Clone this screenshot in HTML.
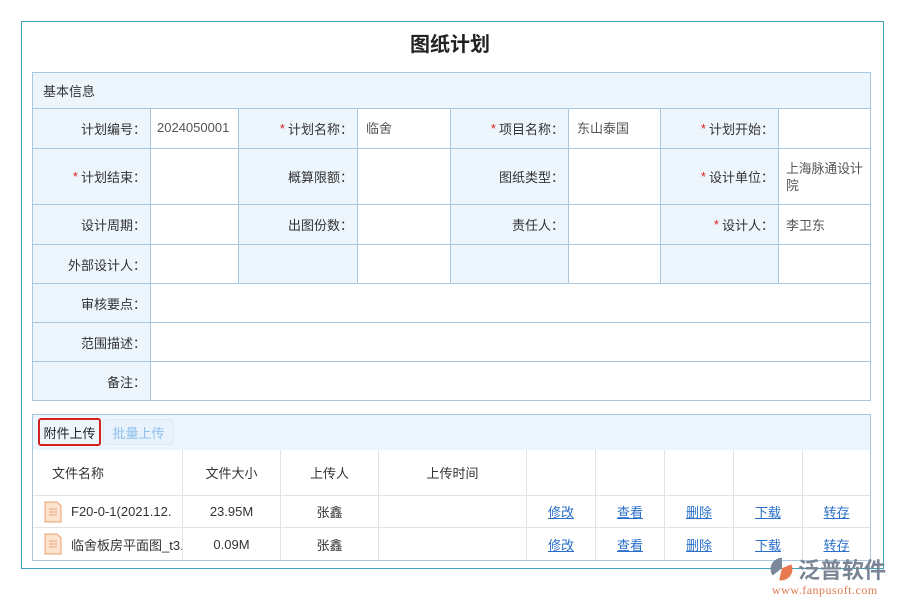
<!DOCTYPE html>
<html><head><meta charset="utf-8"><style>
body{margin:0;width:900px;height:600px;background:#fff;position:relative;overflow:hidden;font-family:"Liberation Sans","Noto Sans CJK SC",sans-serif;font-size:13px;color:#333}
.a{position:absolute;box-sizing:border-box}
.c{position:absolute;box-sizing:border-box;border:1px solid #a9c8e0;display:flex;align-items:center;padding:0 8px;margin:0 -1px -1px 0}
.l{background:#eef6fd;justify-content:flex-end;padding-right:4px}
.v{background:#fff;color:#555}
.s{color:#e02020;margin-right:3px}
.t{position:absolute;box-sizing:border-box;border-right:1px solid #e3e3e3;border-bottom:1px solid #e3e3e3;display:flex;align-items:center;justify-content:center;color:#333}
.k{color:#2a6fc9;text-decoration:underline}
</style></head><body>
<div class="a" style="left:21px;top:21px;width:863px;height:548px;border:1px solid #3fa0b8"></div>
<div class="a" style="left:0;top:28px;width:900px;text-align:center;font-size:20px;font-weight:bold;color:#222">图纸计划</div>
<div class="c" style="left:32px;top:72px;width:839px;height:37px;background:#eef6fd;justify-content:flex-start;padding-left:10px">基本信息</div>

<div class="c l" style="left:32px;top:108px;width:119px;height:41px">计划编号：</div>
<div class="c v" style="left:150px;top:108px;width:89px;height:41px;padding:0 0 2px 6px">2024050001</div>
<div class="c l" style="left:238px;top:108px;width:120px;height:41px"><span class="s">*</span>计划名称：</div>
<div class="c v" style="left:357px;top:108px;width:94px;height:41px;padding-bottom:2px">临舍</div>
<div class="c l" style="left:450px;top:108px;width:119px;height:41px"><span class="s">*</span>项目名称：</div>
<div class="c v" style="left:568px;top:108px;width:93px;height:41px;padding-bottom:2px">东山泰国</div>
<div class="c l" style="left:660px;top:108px;width:119px;height:41px"><span class="s">*</span>计划开始：</div>
<div class="c v" style="left:778px;top:108px;width:93px;height:41px"></div>

<div class="c l" style="left:32px;top:148px;width:119px;height:57px"><span class="s">*</span>计划结束：</div>
<div class="c v" style="left:150px;top:148px;width:89px;height:57px"></div>
<div class="c l" style="left:238px;top:148px;width:120px;height:57px">概算限额：</div>
<div class="c v" style="left:357px;top:148px;width:94px;height:57px"></div>
<div class="c l" style="left:450px;top:148px;width:119px;height:57px">图纸类型：</div>
<div class="c v" style="left:568px;top:148px;width:93px;height:57px"></div>
<div class="c l" style="left:660px;top:148px;width:119px;height:57px"><span class="s">*</span>设计单位：</div>
<div class="c v" style="left:778px;top:148px;width:93px;height:57px;align-items:flex-start;padding:11px 0 0 7px;line-height:17px;font-size:12.8px">上海脉通设计院</div>

<div class="c l" style="left:32px;top:204px;width:119px;height:41px">设计周期：</div>
<div class="c v" style="left:150px;top:204px;width:89px;height:41px"></div>
<div class="c l" style="left:238px;top:204px;width:120px;height:41px">出图份数：</div>
<div class="c v" style="left:357px;top:204px;width:94px;height:41px"></div>
<div class="c l" style="left:450px;top:204px;width:119px;height:41px">责任人：</div>
<div class="c v" style="left:568px;top:204px;width:93px;height:41px"></div>
<div class="c l" style="left:660px;top:204px;width:119px;height:41px"><span class="s">*</span>设计人：</div>
<div class="c v" style="left:778px;top:204px;width:93px;height:41px;padding-left:7px">李卫东</div>

<div class="c l" style="left:32px;top:244px;width:119px;height:40px">外部设计人：</div>
<div class="c v" style="left:150px;top:244px;width:89px;height:40px"></div>
<div class="c l" style="left:238px;top:244px;width:120px;height:40px"></div>
<div class="c v" style="left:357px;top:244px;width:94px;height:40px"></div>
<div class="c l" style="left:450px;top:244px;width:119px;height:40px"></div>
<div class="c v" style="left:568px;top:244px;width:93px;height:40px"></div>
<div class="c l" style="left:660px;top:244px;width:119px;height:40px"></div>
<div class="c v" style="left:778px;top:244px;width:93px;height:40px"></div>

<div class="c l" style="left:32px;top:283px;width:119px;height:40px">审核要点：</div>
<div class="c v" style="left:150px;top:283px;width:721px;height:40px"></div>
<div class="c l" style="left:32px;top:322px;width:119px;height:40px">范围描述：</div>
<div class="c v" style="left:150px;top:322px;width:721px;height:40px"></div>
<div class="c l" style="left:32px;top:361px;width:119px;height:40px">备注：</div>
<div class="c v" style="left:150px;top:361px;width:721px;height:40px"></div>

<div class="a" style="left:32px;top:414px;width:839px;height:147px;border:1px solid #a9c8e0"></div>
<div class="a" style="left:33px;top:415px;width:837px;height:35px;background:#eef6fd"></div>
<div class="a" style="left:38px;top:418px;width:63px;height:28px;border:2px solid #d42020;border-radius:3px;display:flex;align-items:center;justify-content:center;color:#222">附件上传</div>
<div class="a" style="left:103px;top:419px;width:71px;height:26px;border:1px solid #dce9f5;border-radius:4px;background:#e8f2fc;display:flex;align-items:center;justify-content:center;color:#8ec0ec">批量上传</div>

<div class="t" style="left:33px;top:450px;width:150px;height:46px;justify-content:flex-start;padding-left:19px">文件名称</div>
<div class="t" style="left:183px;top:450px;width:98px;height:46px">文件大小</div>
<div class="t" style="left:281px;top:450px;width:98px;height:46px">上传人</div>
<div class="t" style="left:379px;top:450px;width:148px;height:46px">上传时间</div>
<div class="t" style="left:527px;top:450px;width:69px;height:46px"></div>
<div class="t" style="left:596px;top:450px;width:69px;height:46px"></div>
<div class="t" style="left:665px;top:450px;width:69px;height:46px"></div>
<div class="t" style="left:734px;top:450px;width:69px;height:46px"></div>
<div class="t" style="left:803px;top:450px;width:67px;height:46px;border-right:none"></div>

<div class="t" style="left:33px;top:496px;width:150px;height:32px;justify-content:flex-start;padding-left:10px"><svg width="20" height="22" viewBox="0 0 20 22" style="margin-right:8px"><path d="M2 1h12l4 4v16H2z" fill="#fbe3cf" stroke="#e8a070"/><path d="M6 8h8M6 11h8M6 14h8" stroke="#e8a070"/></svg>F20-0-1(2021.12.</div>
<div class="t" style="left:183px;top:496px;width:98px;height:32px">23.95M</div>
<div class="t" style="left:281px;top:496px;width:98px;height:32px">张鑫</div>
<div class="t" style="left:379px;top:496px;width:148px;height:32px"></div>
<div class="t" style="left:527px;top:496px;width:69px;height:32px"><span class="k">修改</span></div>
<div class="t" style="left:596px;top:496px;width:69px;height:32px"><span class="k">查看</span></div>
<div class="t" style="left:665px;top:496px;width:69px;height:32px"><span class="k">删除</span></div>
<div class="t" style="left:734px;top:496px;width:69px;height:32px"><span class="k">下载</span></div>
<div class="t" style="left:803px;top:496px;width:67px;height:32px;border-right:none"><span class="k">转存</span></div>

<div class="t" style="left:33px;top:528px;width:150px;height:32px;justify-content:flex-start;padding-left:10px;border-bottom:none;white-space:nowrap;overflow:hidden"><svg width="20" height="22" viewBox="0 0 20 22" style="margin-right:8px;flex:none"><path d="M2 1h12l4 4v16H2z" fill="#fbe3cf" stroke="#e8a070"/><path d="M6 8h8M6 11h8M6 14h8" stroke="#e8a070"/></svg>临舍板房平面图_t3.</div>
<div class="t" style="left:183px;top:528px;width:98px;height:32px;border-bottom:none">0.09M</div>
<div class="t" style="left:281px;top:528px;width:98px;height:32px;border-bottom:none">张鑫</div>
<div class="t" style="left:379px;top:528px;width:148px;height:32px;border-bottom:none"></div>
<div class="t" style="left:527px;top:528px;width:69px;height:32px;border-bottom:none"><span class="k">修改</span></div>
<div class="t" style="left:596px;top:528px;width:69px;height:32px;border-bottom:none"><span class="k">查看</span></div>
<div class="t" style="left:665px;top:528px;width:69px;height:32px;border-bottom:none"><span class="k">删除</span></div>
<div class="t" style="left:734px;top:528px;width:69px;height:32px;border-bottom:none"><span class="k">下载</span></div>
<div class="t" style="left:803px;top:528px;width:67px;height:32px;border:none"><span class="k">转存</span></div>

<svg class="a" style="left:768px;top:555px" width="28" height="28" viewBox="0 0 30 30"><path d="M15 3 A12 12 0 0 0 5 22 L15 14z" fill="#7a8a9a"/><path d="M15 14 L25 10 A12 12 0 0 1 12 27z" fill="#e87a50"/></svg>
<div class="a" style="left:798px;top:553px;font-size:22px;color:#7a8494;font-weight:bold">泛普软件</div>
<div class="a" style="left:772px;top:583px;font-size:12px;color:#e07a50;font-family:'Liberation Serif',serif;letter-spacing:0.5px">www.fanpusoft.com</div>
</body></html>
